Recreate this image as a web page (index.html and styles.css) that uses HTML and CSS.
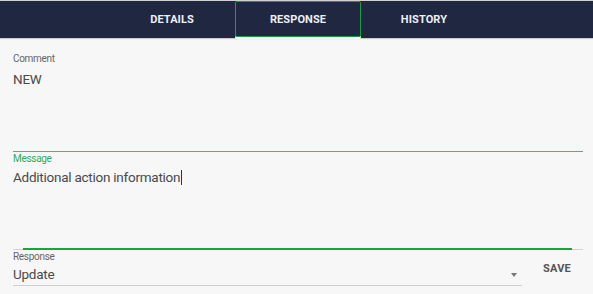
FILE: index.html
```html
<!DOCTYPE html>
<html>
<head>
<meta charset="utf-8">
<link rel="stylesheet" href="styles.css">
</head>
<body>
<nav class="tabs">
  <div class="tab">DETAILS</div>
  <div class="tab active">RESPONSE</div>
  <div class="tab">HISTORY</div>
</nav>
<main class="content">
  <div class="field comment">
    <div class="label">Comment</div>
    <div class="value">NEW</div>
  </div>
  <div class="field message">
    <div class="label green">Message</div>
    <div class="value">Additional action information<span class="caret"></span></div>
    <div class="focus-bar"></div>
  </div>
  <div class="bottom-row">
    <div class="field select">
      <div class="label small">Response</div>
      <div class="select-row">
        <div class="value">Update</div>
        <div class="arrow"></div>
      </div>
    </div>
    <div class="save">SAVE</div>
  </div>
</main>
</body>
</html>
```
FILE: styles.css
```css
html, body {
  margin: 0;
  padding: 0;
  background: #f7f7f7;
  font-family: Roboto, "Liberation Sans", sans-serif;
}
.tabs {
  display: flex;
  justify-content: center;
  background: #1f2741;
  border-top: 1px solid #d0d0d0;
  box-shadow: 0 1px 1px rgba(0,0,0,0.18);
  padding-left: 3px;
  box-sizing: border-box;
  height: 38px;
}
.tab {
  width: 126px;
  display: flex;
  align-items: center;
  justify-content: center;
  color: #eef0f5;
  font-size: 11px;
  font-weight: 700;
  letter-spacing: 0.1px;
  box-sizing: border-box;
}
.tab.active {
  border: 1px solid #1a9c45;
  border-radius: 2px;
  box-shadow: 0 2px 0 #ffffff;
  height: 36px;
}
.content {
  padding: 14px 10px 0 13px;
}
.field {
  position: relative;
  box-sizing: border-box;
}
.label {
  font-size: 10px;
  letter-spacing: -0.3px;
  line-height: 14px;
  color: #666;
}
.label.green {
  color: #2eaa5c;
  line-height: 12px;
  margin-top: 1px;
}
.label.small {
  line-height: 12px;
  margin-top: 1px;
}
.value {
  font-size: 13.5px;
  letter-spacing: -0.25px;
  line-height: 20px;
  color: #4a4a4a;
}
.comment {
  height: 100px;
  border-bottom: 1px solid #4db574;
}
.comment .value {
  margin-top: 3px;
}
.message {
  height: 97px;
  border-bottom: 1px solid #d3d3d3;
}
.message .value {
  margin-top: 2px;
}
.caret {
  display: inline-block;
  width: 1px;
  height: 15px;
  background: #333;
  vertical-align: -3px;
  margin-left: 1px;
}
.focus-bar {
  position: absolute;
  left: 10px;
  right: 11px;
  bottom: -1px;
  height: 2px;
  background: #17a347;
}
.bottom-row {
  display: flex;
  align-items: flex-start;
}
.select {
  width: 509px;
  border-bottom: 1px solid #cfcfcf;
  padding-bottom: 1px;
}
.select-row {
  display: flex;
  align-items: center;
  justify-content: space-between;
  margin-top: 1px;
}
.arrow {
  width: 0;
  height: 0;
  border-left: 3.5px solid transparent;
  border-right: 3.5px solid transparent;
  border-top: 4px solid #777;
  margin-right: 5px;
  margin-top: 2px;
}
.save {
  margin-left: 21px;
  margin-top: 12px;
  font-size: 11px;
  font-weight: 700;
  color: #555;
  letter-spacing: 0.2px;
}
```
